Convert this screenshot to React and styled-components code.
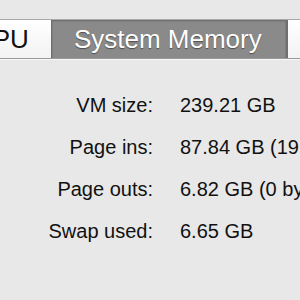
import { Fragment } from "react";
import { createGlobalStyle, styled } from "styled-components";

const Global = createGlobalStyle`
  html, body {
    margin: 0;
    padding: 0;
    background: #e8e8e8;
    overflow: hidden;
  }
  body {
    font-family: "Liberation Sans", Arial, sans-serif;
  }
`;

const Page = styled.div({
  width: "300px",
  height: "300px",
  overflow: "hidden",
  paddingTop: "19px",
  boxSizing: "border-box",
});

const TabBar = styled.div({
  display: "flex",
  marginLeft: "-48px",
  height: "40px",
  boxSizing: "border-box",
  borderTop: "1px solid #a8a8a8",
  borderBottom: "1px solid #9a9a9a",
  background: "linear-gradient(#ffffff, #f2f2f2)",
  boxShadow: "0 1px 0 #f6f6f6",
  whiteSpace: "nowrap",
});

const Tab = styled.div`
  display: flex;
  align-items: center;
  padding: 0 22px;
  font-size: 26px;
  line-height: 1;
  color: ${(p) => (p.$active ? "#ffffff" : "#111111")};
  text-shadow: ${(p) => (p.$active ? "0 1px 1px rgba(0,0,0,0.45)" : "none")};
  background: ${(p) => (p.$active ? "#8a8a8a" : "transparent")};
  border-left: ${(p) => (p.$active ? "1px solid #6e6e6e" : "none")};
  border-right: ${(p) => (p.$active ? "2px solid #6e6e6e" : "none")};
  box-shadow: ${(p) => (p.$active ? "inset 0 1px 2px rgba(0,0,0,0.25)" : "none")};
  padding-right: ${(p) => (p.$active ? "24px" : "22px")};
  flex: ${(p) => (p.$fill ? "1" : "none")};
`;

const Stats = styled.div({
  display: "grid",
  gridTemplateColumns: "153px auto",
  columnGap: "27px",
  marginTop: "25px",
  fontSize: "20px",
  lineHeight: "42px",
  color: "#111111",
  whiteSpace: "nowrap",
});

const Label = styled.div({
  textAlign: "right",
});

const Value = styled.div({
  textAlign: "left",
});

const rows = [
  ["VM size:", "239.21 GB"],
  ["Page ins:", "87.84 GB (19,827,385)"],
  ["Page outs:", "6.82 GB (0 bytes/s)"],
  ["Swap used:", "6.65 GB"],
];

function App() {
  return (
    <>
      <Global />
      <Page>
        <TabBar>
          <Tab>CPU</Tab>
          <Tab $active>System Memory</Tab>
          <Tab $fill>Disk Activity</Tab>
        </TabBar>
        <Stats>
          {rows.map(([label, value]) => (
            <Fragment key={label}>
              <Label>{label}</Label>
              <Value>{value}</Value>
            </Fragment>
          ))}
        </Stats>
      </Page>
    </>
  );
}

export default App;
